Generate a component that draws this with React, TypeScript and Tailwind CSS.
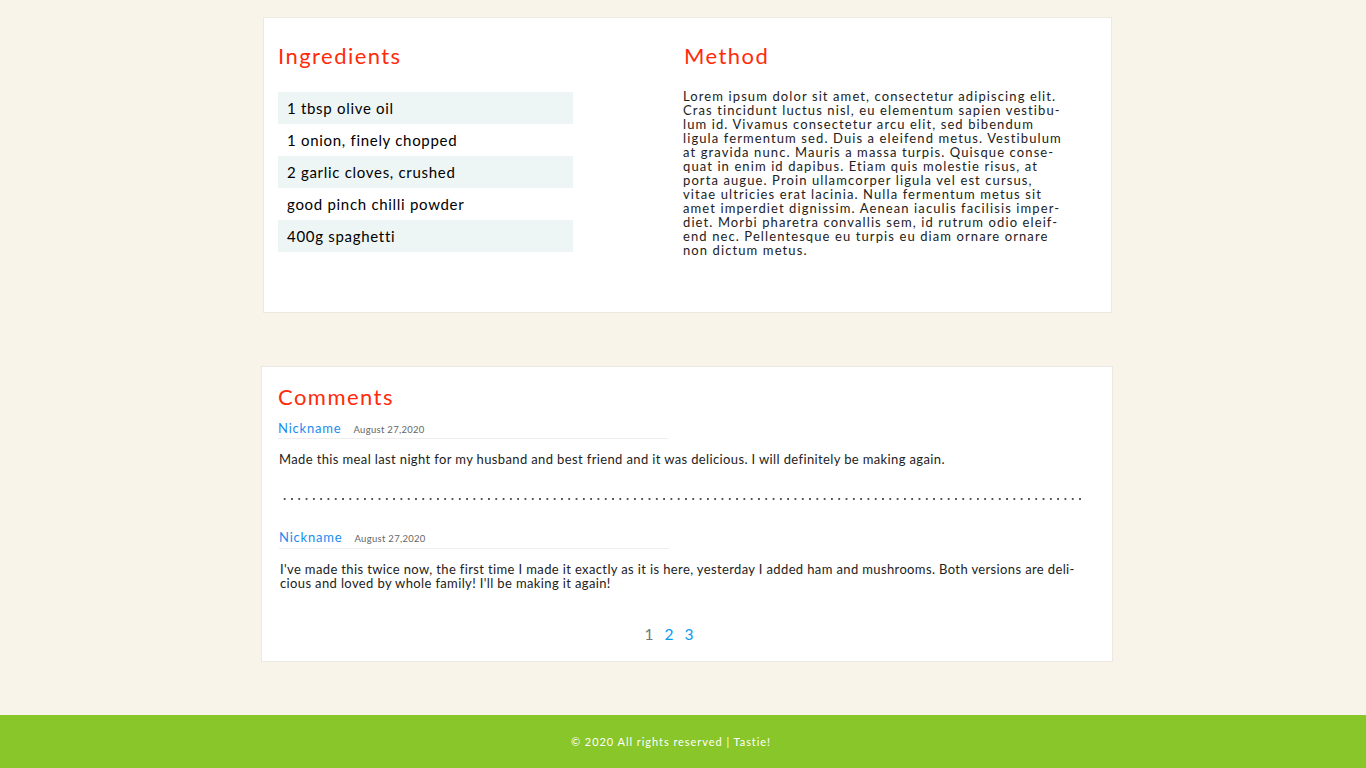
const methodLines = [
  "Lorem ipsum dolor sit amet, consectetur adipiscing elit.",
  "Cras tincidunt luctus nisl, eu elementum sapien vestibu-",
  "lum id. Vivamus consectetur arcu elit, sed bibendum",
  "ligula fermentum sed. Duis a eleifend metus. Vestibulum",
  "at gravida nunc. Mauris a massa turpis. Quisque conse-",
  "quat in enim id dapibus. Etiam quis molestie risus, at",
  "porta augue. Proin ullamcorper ligula vel est cursus,",
  "vitae ultricies erat lacinia. Nulla fermentum metus sit",
  "amet imperdiet dignissim. Aenean iaculis facilisis imper-",
  "diet. Morbi pharetra convallis sem, id rutrum odio eleif-",
  "end nec. Pellentesque eu turpis eu diam ornare ornare",
  "non dictum metus.",
];

const ingredients = [
  "1 tbsp olive oil",
  "1 onion, finely chopped",
  "2 garlic cloves, crushed",
  "good pinch chilli powder",
  "400g spaghetti",
];

function CommentHead() {
  return (
    <div className="flex items-baseline w-[390px] border-b border-[#eeeeee] pb-[1px]">
      <span className="text-[13px] leading-[16px] text-[#1a8cf0] tracking-[0.8px]">Nickname</span>
      <span className="ml-[12px] text-[9.5px] text-[#666] tracking-[0.3px]">August 27,2020</span>
    </div>
  );
}

export default function App() {
  return (
    <div className="w-full min-h-screen bg-[#f8f4ea] font-['Lato',sans-serif] text-[#222]">
      {/* Recipe card */}
      <div className="pt-[17px]">
        <div className="ml-[263px] w-[849px] h-[296px] bg-white border border-[#ece9e2] flex">
          <div className="w-[419px] pl-[14px] pt-[24px]">
            <h2 className="text-[22px] leading-[28px] text-[#ff2a0a] tracking-[1.45px]">Ingredients</h2>
            <ul className="mt-[22px] w-[295px]">
              {ingredients.map((item, i) => (
                <li
                  key={item}
                  className={`h-[32px] flex items-center pl-[9px] text-[15px] text-black tracking-[0.7px] ${
                    i % 2 === 0 ? "bg-[#eef6f5]" : ""
                  }`}
                >
                  {item}
                </li>
              ))}
            </ul>
          </div>
          <div className="pt-[24px]">
            <h2 className="text-[22px] leading-[28px] text-[#ff2a0a] tracking-[1.45px] ml-[1px]">Method</h2>
            <p className="mt-[19px] text-[13px] leading-[14px] tracking-[1.1px] text-[#222] whitespace-nowrap">
              {methodLines.map((l) => (
                <span key={l} className="block">
                  {l}
                </span>
              ))}
            </p>
          </div>
        </div>
      </div>

      {/* Comments card */}
      <div className="pt-[53px]">
        <div className="ml-[261px] w-[852px] h-[296px] bg-white border border-[#ece9e2] pl-[16px] pt-[16px]">
          <h2 className="text-[22px] leading-[28px] text-[#ff2a0a] tracking-[1.45px]">Comments</h2>
          <div className="mt-[9px]">
            <CommentHead />
          </div>
          <p className="mt-[13px] ml-[1px] text-[13px] leading-[14px] tracking-[0.37px]">
            Made this meal last night for my husband and best friend and it was delicious. I will definitely be making again.
          </p>
          <div className="mt-[32px] ml-[3px] w-[803px] h-[2px] bg-[radial-gradient(circle,#555_0.7px,transparent_1.1px)] bg-[length:7.3px_2px]" />
          <div className="mt-[29px] ml-[1px]">
            <CommentHead />
          </div>
          <p className="mt-[13px] ml-[2px] text-[13px] leading-[14px] tracking-[0.37px] whitespace-nowrap">
            <span className="block">
              I've made this twice now, the first time I made it exactly as it is here, yesterday I added ham and mushrooms. Both versions are deli-
            </span>
            <span className="block">cious and loved by whole family! I'll be making it again!</span>
          </p>
          <div className="mt-[34px] flex justify-center gap-[11px] pr-[52px] text-[15.5px] leading-[20px]">
            <span className="text-[#777]">1</span>
            <span className="text-[#0a9cf0]">2</span>
            <span className="text-[#0a9cf0]">3</span>
          </div>
        </div>
      </div>

      {/* Footer */}
      <footer className="mt-[53px] h-[53px] bg-[#89c62a] flex items-center justify-center pr-[24px] pt-[2px]">
        <span className="text-[11px] text-white tracking-[0.95px]">© 2020 All rights reserved | Tastie!</span>
      </footer>
    </div>
  );
}
